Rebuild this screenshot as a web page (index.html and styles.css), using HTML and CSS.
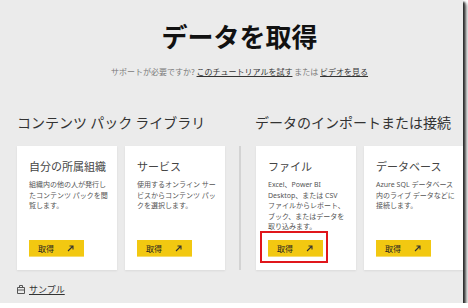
FILE: index.html
```html
<!DOCTYPE html>
<html lang="ja">
<head>
  <meta charset="UTF-8">
  <title>データを取得</title>
  <link rel="stylesheet" href="styles.css">
</head>
<body>
  <div class="frame">
    <header class="cabecalho">
      <h1>データを取得</h1>
      <p class="ajuda">サポートが必要ですか? <a href="#">このチュートリアルを試す</a> または <a href="#">ビデオを見る</a></p>
    </header>

    <div class="secoes">
      <section class="secao">
        <h2>コンテンツ パック ライブラリ</h2>
        <div class="cartoes">
          <div class="cartao">
            <h3>自分の所属組織</h3>
            <p>組織内の他の人が発行し<br>たコンテンツ パックを閲<br>覧します。</p>
            <button class="botaoObter">取得 <svg width="7" height="7" viewBox="0 0 7 7"><path d="M1 6 L6 1 M2.5 1 H6 V4.5" fill="none" stroke="#333" stroke-width="1.1"/></svg></button>
          </div>
          <div class="cartao">
            <h3>サービス</h3>
            <p>使用するオンライン サー<br>ビスからコンテンツ パッ<br>クを選択します。</p>
            <button class="botaoObter">取得 <svg width="7" height="7" viewBox="0 0 7 7"><path d="M1 6 L6 1 M2.5 1 H6 V4.5" fill="none" stroke="#333" stroke-width="1.1"/></svg></button>
          </div>
        </div>
      </section>

      <section class="secao secaoDireita">
        <h2>データのインポートまたは接続</h2>
        <div class="cartoes">
          <div class="cartao">
            <h3>ファイル</h3>
            <p>Excel、Power BI<br>Desktop、または CSV<br>ファイルからレポート、<br>ブック、またはデータを<br>取り込みます。</p>
            <button class="botaoObter destaque">取得 <svg width="7" height="7" viewBox="0 0 7 7"><path d="M1 6 L6 1 M2.5 1 H6 V4.5" fill="none" stroke="#333" stroke-width="1.1"/></svg></button>
          </div>
          <div class="cartao">
            <h3>データベース</h3>
            <p>Azure SQL データベース<br>内のライブ データなどに<br>接続します。</p>
            <button class="botaoObter">取得 <svg width="7" height="7" viewBox="0 0 7 7"><path d="M1 6 L6 1 M2.5 1 H6 V4.5" fill="none" stroke="#333" stroke-width="1.1"/></svg></button>
          </div>
        </div>
      </section>
    </div>

    <a class="amostra" href="#">
      <svg width="8" height="9" viewBox="0 0 8 9"><path d="M0.5 2.5 H7.5 V8.5 H0.5 Z M2.5 2.5 V0.5 H5.5 V2.5 M0.5 5 H7.5" fill="none" stroke="#555" stroke-width="1"/></svg>
      <span>サンプル</span>
    </a>
  </div>
</body>
</html>
```

FILE: styles.css
```css
body {
  margin: 0;
  background: #ffffff;
  font-family: "Noto Sans", "Noto Sans CJK JP", sans-serif;
}
.frame {
  width: 463px;
  height: 303px;
  background: #ebebeb;
  overflow: hidden;
  box-shadow: 2px 2px 2px #2a2a2a, 4px 4px 3px rgba(0,0,0,0.4);
}
.cabecalho {
  text-align: center;
  padding: 19px 0 0 16px;
}
h1 {
  margin: 0;
  font-family: "Noto Sans CJK JP", sans-serif;
  font-size: 26px;
  line-height: 34px;
  font-weight: bold;
  color: #111;
}
.ajuda {
  margin: 13px 0 0;
  font-family: "Noto Sans CJK JP", sans-serif;
  font-size: 8px;
  line-height: 12px;
  color: #7a7a7a;
}
.ajuda a {
  color: #333;
  text-decoration: underline;
}
.secoes {
  display: flex;
  margin-top: 34px;
}
.secao {
  width: 224px;
  padding-left: 17px;
  box-sizing: border-box;
  flex-shrink: 0;
}
.secaoDireita {
  padding-left: 15px;
  width: 239px;
}
h2 {
  margin: 0 0 14px;
  font-family: "Noto Sans CJK JP", sans-serif;
  font-size: 14px;
  line-height: 20px;
  font-weight: normal;
  color: #333;
  white-space: nowrap;
}
.secaoDireita h2 {
  padding-left: 16px;
}
.cartoes {
  display: flex;
  gap: 8px;
}
.secaoDireita .cartoes {
  border-left: 2px solid #d3d3d3;
  padding-left: 15px;
}
.cartao {
  width: 100px;
  height: 124px;
  flex-shrink: 0;
  box-sizing: border-box;
  background: #fff;
  padding: 12px 12px 13px;
  display: flex;
  flex-direction: column;
  align-items: flex-start;
  box-shadow: 0 1px 2px rgba(0,0,0,0.08);
}
h3 {
  margin: 0;
  font-family: "Noto Sans CJK JP", sans-serif;
  font-size: 11px;
  line-height: 16px;
  font-weight: normal;
  color: #444;
  white-space: nowrap;
}
.cartao p {
  margin: 6px 0 0;
  font-size: 7px;
  line-height: 10.6px;
  color: #555;
  white-space: nowrap;
}
.botaoObter {
  margin-top: auto;
  width: 55px;
  height: 17px;
  padding: 0 10px 0 9px;
  border: none;
  border-bottom: 1px solid #f7dc6a;
  background: #f2c811;
  font-family: "Noto Sans CJK JP", sans-serif;
  font-size: 8px;
  color: #222;
  display: flex;
  align-items: center;
  justify-content: space-between;
  position: relative;
}
.destaque::after {
  content: "";
  position: absolute;
  left: -8px;
  top: -9px;
  width: 64px;
  height: 28px;
  border: 2px solid #e0161b;
}
.amostra {
  display: flex;
  align-items: center;
  gap: 4px;
  margin: 13px 0 0 17px;
  font-family: "Noto Sans CJK JP", sans-serif;
  font-size: 9px;
  color: #333;
  text-decoration: none;
}
.amostra span {
  text-decoration: underline;
}
```
